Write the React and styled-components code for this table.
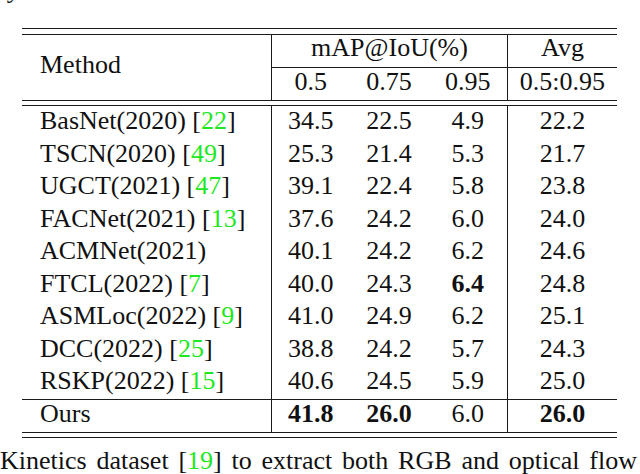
import React from "react";
import styled, { createGlobalStyle } from "styled-components";

const GlobalStyle = createGlobalStyle`
  html, body {
    margin: 0;
    padding: 0;
    background: #fff;
    overflow: hidden;
  }
  body {
    font-family: "Liberation Serif", "Times New Roman", serif;
    font-size: 26px;
    color: #111;
  }
`;

const COLS = "249px 78.7px 78.7px 78.6px 110px";
const LINE = "1.4px solid #1a1a1a";

const Page = styled.div`
  width: 640px;
  height: 474px;
  overflow: hidden;
  display: flex;
  flex-direction: column;
`;

const Para = styled.p`
  margin: ${(p) => p.$top || 0}px 0 0 ${(p) => p.$left || 0}px;
  line-height: 26px;
  white-space: nowrap;
  word-spacing: ${(p) => p.$spread || 0}px;
`;

const Cite = styled.span`
  color: #1de81d;
`;

const Table = styled.div`
  margin: 25px 0 0 22px;
  width: 595px;
  display: flex;
  flex-direction: column;
`;

const DoubleRule = styled.div`
  height: 4.5px;
  border-top: ${LINE};
  border-bottom: ${LINE};
`;

const Head = styled.div`
  display: grid;
  grid-template-columns: ${COLS};
  grid-template-rows: 33.5px 31.5px;
`;

const HeadCell = styled.div`
  line-height: 26px;
  display: flex;
  justify-content: center;
  align-items: ${(p) => (p.$middle ? "center" : "flex-start")};
  padding-top: ${(p) => (p.$middle ? 0 : 0.5)}px;
  grid-column: ${(p) => p.$col || "auto"};
  grid-row: ${(p) => p.$row || "auto"};
  border-left: ${(p) => (p.$line ? LINE : "none")};
  border-bottom: ${(p) => (p.$under ? LINE : "none")};
`;

const MethodHead = styled(HeadCell)`
  justify-content: flex-start;
  padding: 0 0 4px 18px;
`;

const Row = styled.div`
  display: grid;
  grid-template-columns: ${COLS};
  height: ${(p) => (p.$last ? 32 : 32.5)}px;
  border-top: ${(p) => (p.$last ? LINE : "none")};
`;

const Cell = styled.div`
  line-height: ${(p) => (p.$last ? 28 : 30)}px;
  text-align: center;
  white-space: nowrap;
  font-weight: ${(p) => (p.$bold ? 700 : 400)};
  border-left: ${(p) => (p.$line ? LINE : "none")};
`;

const MethodCell = styled(Cell)`
  text-align: left;
  padding-left: 18px;
`;

const rows = [
  ["BasNet(2020)", "22", "34.5", "22.5", "4.9", "22.2"],
  ["TSCN(2020)", "49", "25.3", "21.4", "5.3", "21.7"],
  ["UGCT(2021)", "47", "39.1", "22.4", "5.8", "23.8"],
  ["FACNet(2021)", "13", "37.6", "24.2", "6.0", "24.0"],
  ["ACMNet(2021)", null, "40.1", "24.2", "6.2", "24.6"],
  ["FTCL(2022)", "7", "40.0", "24.3", "6.4", "24.8"],
  ["ASMLoc(2022)", "9", "41.0", "24.9", "6.2", "25.1"],
  ["DCC(2022)", "25", "38.8", "24.2", "5.7", "24.3"],
  ["RSKP(2022)", "15", "40.6", "24.5", "5.9", "25.0"],
];

export default function App() {
  return (
    <Page>
      <GlobalStyle />
      <Para $top={-23} $left={-2}>
        ry w.r.t IoU is utilized.
      </Para>
      <Table>
        <DoubleRule />
        <Head>
          <MethodHead $row="1 / 3" $middle>
            Method
          </MethodHead>
          <HeadCell $col="2 / 5" $line $under>
            mAP@IoU(%)
          </HeadCell>
          <HeadCell $col="5" $line $under>
            Avg
          </HeadCell>
          <HeadCell $col="2" $row="2" $line>
            0.5
          </HeadCell>
          <HeadCell $col="3" $row="2">
            0.75
          </HeadCell>
          <HeadCell $col="4" $row="2">
            0.95
          </HeadCell>
          <HeadCell $col="5" $row="2" $line>
            0.5:0.95
          </HeadCell>
        </Head>
        <DoubleRule />
        {rows.map(([name, cite, a, b, c, avg]) => (
          <Row key={name}>
            <MethodCell>
              {name}
              {cite && (
                <>
                  {" "}[<Cite>{cite}</Cite>]
                </>
              )}
            </MethodCell>
            <Cell $line>{a}</Cell>
            <Cell>{b}</Cell>
            <Cell $bold={name === "FTCL(2022)"}>{c}</Cell>
            <Cell $line>{avg}</Cell>
          </Row>
        ))}
        <Row $last>
          <MethodCell $last>Ours</MethodCell>
          <Cell $last $line $bold>
            41.8
          </Cell>
          <Cell $last $bold>
            26.0
          </Cell>
          <Cell $last>6.0</Cell>
          <Cell $last $line $bold>
            26.0
          </Cell>
        </Row>
        <DoubleRule />
      </Table>
      <Para $top={10} $spread={3.3}>
        Kinetics dataset [<Cite>19</Cite>] to extract both RGB and optical flow
      </Para>
    </Page>
  );
}
